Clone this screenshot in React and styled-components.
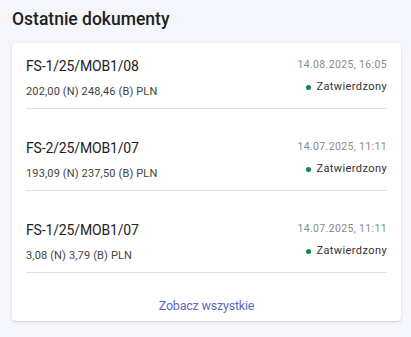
import React from "react";
import styled, { createGlobalStyle } from "styled-components";

const GlobalStyle = createGlobalStyle`
  body {
    margin: 0;
    background: #f5f6fb;
    font-family: Roboto, "Liberation Sans", sans-serif;
  }
`;

const Page = styled.div`
  padding: 8px 10px 15px 12px;
`;

const Heading = styled.h2`
  margin: 0 0 13px;
  font-size: 17.5px;
  line-height: 22px;
  font-weight: 500;
  color: #212121;
`;

const Card = styled.div`
  background: #fff;
  border-radius: 4px;
  box-shadow: 0 1px 3px rgba(0, 0, 0, 0.12), 0 1px 1px rgba(0, 0, 0, 0.06);
  padding: 0 14px;
`;

const Row = styled.div`
  display: flex;
  justify-content: space-between;
  align-items: flex-start;
  padding: 14px 0 8px;
  margin-top: ${(p) => (p.$first ? "0" : "16px")};
  border-bottom: 1px solid #e0e0e0;
`;

const Left = styled.div`
  display: flex;
  flex-direction: column;
  gap: 8px;
`;

const Right = styled.div`
  display: flex;
  flex-direction: column;
  align-items: flex-end;
  gap: 6px;
`;

const DocNumber = styled.div`
  font-size: 14px;
  line-height: 19px;
  letter-spacing: -0.15px;
  color: #212121;
`;

const Amount = styled.div`
  font-size: 11px;
  line-height: 16px;
  color: #424242;
  letter-spacing: 0.15px;
`;

const DateText = styled.div`
  font-size: 10.5px;
  line-height: 16px;
  color: #8a8a8a;
  letter-spacing: 0.35px;
`;

const Status = styled.div`
  display: flex;
  align-items: center;
  gap: 6px;
  font-size: 11px;
  line-height: 16px;
  color: #333;
  letter-spacing: 0.4px;
`;

const Dot = styled.span`
  width: 5px;
  height: 5px;
  border-radius: 50%;
  background: ${(p) => p.color};
`;

const Footer = styled.div`
  display: flex;
  justify-content: center;
  padding: 24px 0 6px;
`;

const Link = styled.a`
  font-size: 12.5px;
  line-height: 18px;
  letter-spacing: -0.2px;
  color: #5c6bc0;
  text-decoration: none;
  cursor: pointer;
`;

const docs = [
  { number: "FS-1/25/MOB1/08", amount: "202,00 (N) 248,46 (B) PLN", date: "14.08.2025, 16:05" },
  { number: "FS-2/25/MOB1/07", amount: "193,09 (N) 237,50 (B) PLN", date: "14.07.2025, 11:11" },
  { number: "FS-1/25/MOB1/07", amount: "3,08 (N) 3,79 (B) PLN", date: "14.07.2025, 11:11" },
];

const App = () => {
  return (
    <Page>
      <GlobalStyle />
      <Heading>Ostatnie dokumenty</Heading>
      <Card>
        {docs.map((doc, i) => (
          <Row key={doc.number + i} $first={i === 0}>
            <Left>
              <DocNumber>{doc.number}</DocNumber>
              <Amount>{doc.amount}</Amount>
            </Left>
            <Right>
              <DateText>{doc.date}</DateText>
              <Status>
                <Dot color="#0b8a45" />
                Zatwierdzony
              </Status>
            </Right>
          </Row>
        ))}
        <Footer>
          <Link>Zobacz wszystkie</Link>
        </Footer>
      </Card>
    </Page>
  );
};

export default App;
